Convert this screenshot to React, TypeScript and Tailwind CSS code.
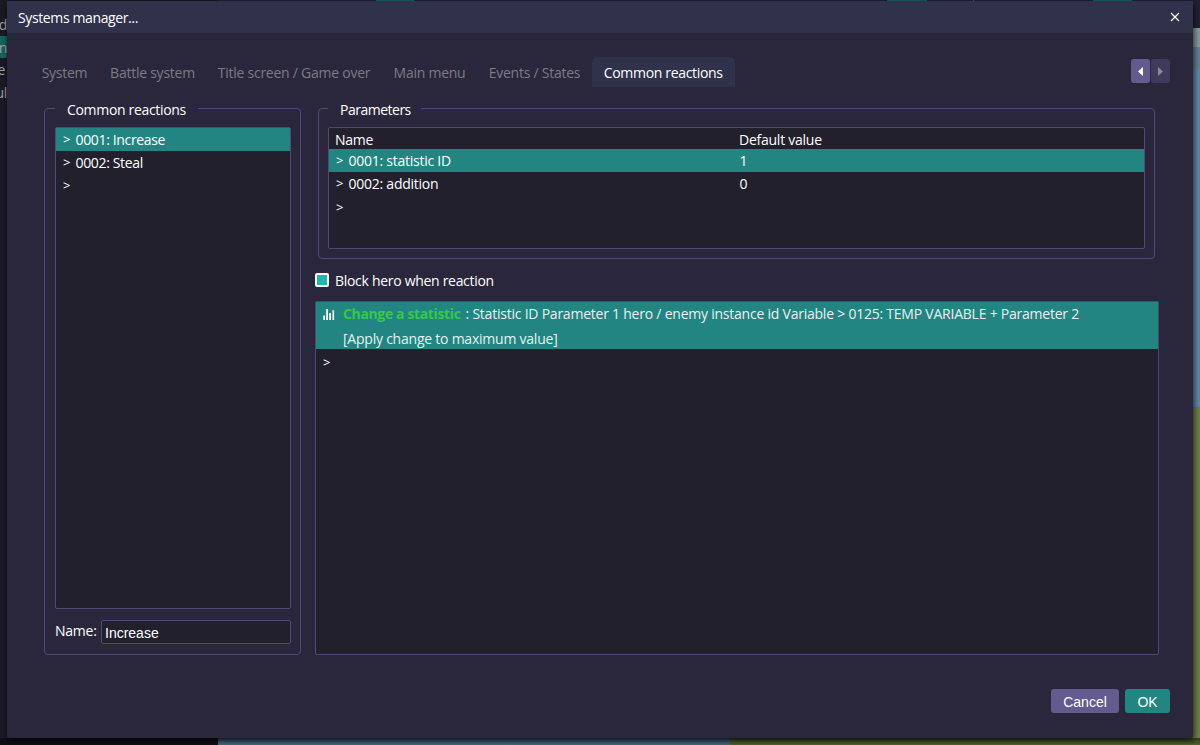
import React, { useState } from "react";

type Row = { id: string; name: string; value?: string };

const TABS = [
  { label: "System", cls: "w-[69px]" },
  { label: "Battle system", cls: "w-[107px]" },
  { label: "Title screen / Game over", cls: "w-[176px]" },
  { label: "Main menu", cls: "w-[95px]" },
  { label: "Events / States", cls: "w-[115px]" },
  { label: "Common reactions", cls: "w-[142.5px]" },
];

const REACTIONS: Row[] = [
  { id: "0001", name: "Increase" },
  { id: "0002", name: "Steal" },
];

const PARAMETERS: Row[] = [
  { id: "0001", name: "statistic ID", value: "1" },
  { id: "0002", name: "addition", value: "0" },
];

// The editor that stays visible around the dialog
function Backdrop() {
  return (
    <div className="absolute inset-0 flex bg-[#1b1924]">
      <div className="flex w-[218px] flex-col pt-[13px] text-[#a3a2a6]">
        <div className="flex h-[23px] w-[7px] items-center justify-end">d</div>
        <div className="flex h-[22px] w-[7px] items-center justify-end bg-[#17645f]">n</div>
        <div className="flex h-[23px] w-[7px] items-center justify-end pr-[2px]">e</div>
        <div className="flex h-[22px] w-[7px] items-center justify-end">ul</div>
        <div className="mt-auto h-[7px] bg-[#0e0d13]" />
      </div>
      <div className="flex flex-1 flex-col">
        <div className="flex h-[28px] bg-[#222133]">
          <div className="ml-[158px] h-px w-[38px] bg-[#17645f]" />
          <div className="ml-[473px] h-px w-[40px] bg-[#17645f]" />
          <div className="ml-[46px] h-px w-px bg-[#55546a]" />
          <div className="ml-[119px] h-px w-[39px] bg-[#17645f]" />
        </div>
        <div className="h-[19px] bg-[#8a9a9d]" />
        <div className="h-[21px] bg-[#668294]" />
        <div className="flex-1 bg-[#6288a8]" />
        <div className="h-[331px] bg-[#6d8148]" />
        <div className="flex h-[7px]">
          <div className="w-[512px] bg-gradient-to-b from-[#2c4253] to-[#486a82]" />
          <div className="flex-1 bg-gradient-to-b from-[#323e1c] to-[#52652f]" />
        </div>
      </div>
    </div>
  );
}

function TitleBar() {
  return (
    <header className="flex h-[32px] shrink-0 items-center justify-between bg-[#2f324a] pr-[13px] pl-[11px]">
      <h1 className="tracking-[-0.38px] text-white">Systems manager...</h1>
      <button type="button" aria-label="Close" className="text-white">
        <svg width="10" height="10" viewBox="0 0 10 10" stroke="currentColor" strokeWidth="1.3">
          <path d="M1 1 9 9M9 1 1 9" />
        </svg>
      </button>
    </header>
  );
}

function GroupBox({
  title,
  legendCls,
  className,
  children,
}: {
  title: string;
  legendCls: string;
  className: string;
  children: React.ReactNode;
}) {
  return (
    <section className={`flex flex-col rounded-[4px] border border-[#4f4978] ${className}`}>
      <h2 className={`-mt-[10px] mb-[6px] h-[22px] shrink-0 bg-[#2a273d] leading-[22px] ${legendCls}`}>
        {title}
      </h2>
      {children}
    </section>
  );
}

function Caret() {
  return <span className="w-[12.5px] shrink-0 pt-px text-[13px]">&gt;</span>;
}

function ReactionList() {
  const [selected, setSelected] = useState("0001");

  return (
    <ul className="min-h-0 flex-1 rounded-[2px] border border-[#4f4978] bg-[#23202e]">
      {REACTIONS.map((r) => (
        <li
          key={r.id}
          onClick={() => setSelected(r.id)}
          className={`flex h-[22.7px] items-center pl-[7px] tracking-[-0.35px] ${
            selected === r.id ? "bg-[#228581]" : ""
          }`}
        >
          <Caret />
          {r.id}: {r.name}
        </li>
      ))}
      <li className="flex h-[22.7px] items-center pt-px pl-[7px]">
        <Caret />
      </li>
    </ul>
  );
}

function ParameterTable() {
  const [selected, setSelected] = useState("0001");

  return (
    <div className="h-[122px] rounded-[2px] border border-[#4f4978] bg-[#23202e]">
      <div className="flex h-[21px] items-center pt-[2px] pl-[6px]">
        <span className="w-[404px]">Name</span>
        <span>Default value</span>
      </div>
      {PARAMETERS.map((p) => (
        <div
          key={p.id}
          onClick={() => setSelected(p.id)}
          className={`flex h-[23px] items-center pl-[7px] ${selected === p.id ? "bg-[#228581]" : ""}`}
        >
          <Caret />
          <span className="w-[391px]">
            {p.id}: {p.name}
          </span>
          <span>{p.value}</span>
        </div>
      ))}
      <div className="flex h-[23px] items-center pt-px pl-[7px]">
        <Caret />
      </div>
    </div>
  );
}

function CommandList() {
  return (
    <div className="min-h-0 flex-1 rounded-[2px] border border-[#4f4978] bg-[#23202e]">
      <div className="flex h-[47px] bg-[#228581] pl-[7px]">
        <svg width="12" height="12" viewBox="0 0 12 12" fill="#fff" className="mt-[6px] mr-[8px]">
          <path d="M.3 7.5h1.6V12H.3zM3.2 1h1.8v11H3.2zM6.2 5h1.8v7H6.2zM9.5 2.2h1.6V12H9.5z" />
        </svg>
        <div className="leading-[24.5px] tracking-[-0.23px] whitespace-nowrap text-[#e6f2f1]">
          <p className="flex">
            <strong className="mr-[5px] font-bold tracking-[-0.36px] text-[#36c74b]">Change a statistic</strong>
            <span>
              : Statistic ID Parameter 1 hero / enemy instance id Variable &gt; 0125: TEMP VARIABLE + Parameter 2
            </span>
          </p>
          <p>[Apply change to maximum value]</p>
        </div>
      </div>
      <div className="flex h-[24px] items-center pt-[2px] pl-[7px]">
        <Caret />
      </div>
    </div>
  );
}

export default function App() {
  const [tab, setTab] = useState("Common reactions");
  const [name, setName] = useState("Increase");
  const [blockHero, setBlockHero] = useState(true);

  return (
    <div className="relative h-[745px] w-[1200px] overflow-hidden pt-px pl-[7px] font-['Open_Sans','Noto_Sans',sans-serif] text-[14px] tracking-[-0.25px] text-white">
      <Backdrop />

      <div className="relative flex h-[737px] w-[1186px] flex-col rounded-[2px] bg-[#2a273d] shadow-[1px_2px_6px_rgba(0,0,0,0.75)]">
        <TitleBar />

        <div className="flex items-start pt-[24px] pr-[23px] pl-[23px]">
          <nav className="flex">
            {TABS.map((t) => (
              <button
                key={t.label}
                type="button"
                onClick={() => setTab(t.label)}
                className={`h-[30px] rounded-t-[5px] pt-px text-center whitespace-nowrap ${t.cls} ${
                  tab === t.label ? "bg-[#2f324a] tracking-[-0.32px] text-white" : "text-[#7c7b83]"
                }`}
              >
                {t.label}
              </button>
            ))}
          </nav>
          <div className="mt-[2px] ml-auto flex gap-px">
            <button
              type="button"
              aria-label="Previous tab"
              className="flex h-[24px] w-[19px] items-center justify-center rounded-[3px] bg-[#635b8e]"
            >
              <svg width="5" height="9" viewBox="0 0 5 9" fill="#fff">
                <path d="M5 0v9L0 4.5z" />
              </svg>
            </button>
            <button
              type="button"
              aria-label="Next tab"
              disabled
              className="flex h-[24px] w-[19px] items-center justify-center rounded-[3px] bg-[#403b5c]"
            >
              <svg width="5" height="9" viewBox="0 0 5 9" fill="#8c8999">
                <path d="M0 0v9l5-4.5z" />
              </svg>
            </button>
          </div>
        </div>

        <main className="mt-[21px] flex h-[547px] pl-[37px]">
          <GroupBox
            title="Common reactions"
            legendCls="w-[143px] pl-[12px] tracking-[-0.32px]"
            className="w-[257px] pr-[9px] pl-[10px]"
          >
            <ReactionList />
            <label className="mt-[11px] mb-[10px] flex h-[24px] shrink-0 items-center">
              <span className="w-[46px] pb-[3px]">Name:</span>
              <input
                value={name}
                onChange={(e) => setName(e.target.value)}
                className="h-[24px] w-[190px] rounded-[2px] border border-[#4f4978] bg-[#23202e] px-[3px] pt-px font-['Liberation_Sans',sans-serif] tracking-normal outline-none"
              />
            </label>
          </GroupBox>

          <div className="ml-[14px] flex w-[844px] flex-col">
            <GroupBox
              title="Parameters"
              legendCls="w-[93px] pl-[12px] tracking-[-0.5px]"
              className="mr-[4px] ml-[3px] h-[151px] pr-[9px] pl-[9px]"
            >
              <ParameterTable />
            </GroupBox>

            <label className="mt-[11px] mb-[10px] flex h-[21px] items-center tracking-[-0.3px]">
              <input
                type="checkbox"
                checked={blockHero}
                onChange={(e) => setBlockHero(e.target.checked)}
                className="mr-[6px] mb-[2px] h-[14px] w-[14px] appearance-none rounded-[2px] border-2 border-white checked:bg-[#23b5b0]"
              />
              Block hero when reaction
            </label>

            <CommandList />
          </div>
        </main>

        <footer className="mt-[34px] flex justify-end gap-[6px] pr-[23px] font-['Liberation_Sans',sans-serif] tracking-normal">
          <button type="button" className="h-[24px] w-[68px] rounded-[3px] bg-[#635b8e] pt-[2px]">
            Cancel
          </button>
          <button type="button" className="h-[24px] w-[45px] rounded-[3px] bg-[#228581] pt-[2px]">
            OK
          </button>
        </footer>
      </div>
    </div>
  );
}
